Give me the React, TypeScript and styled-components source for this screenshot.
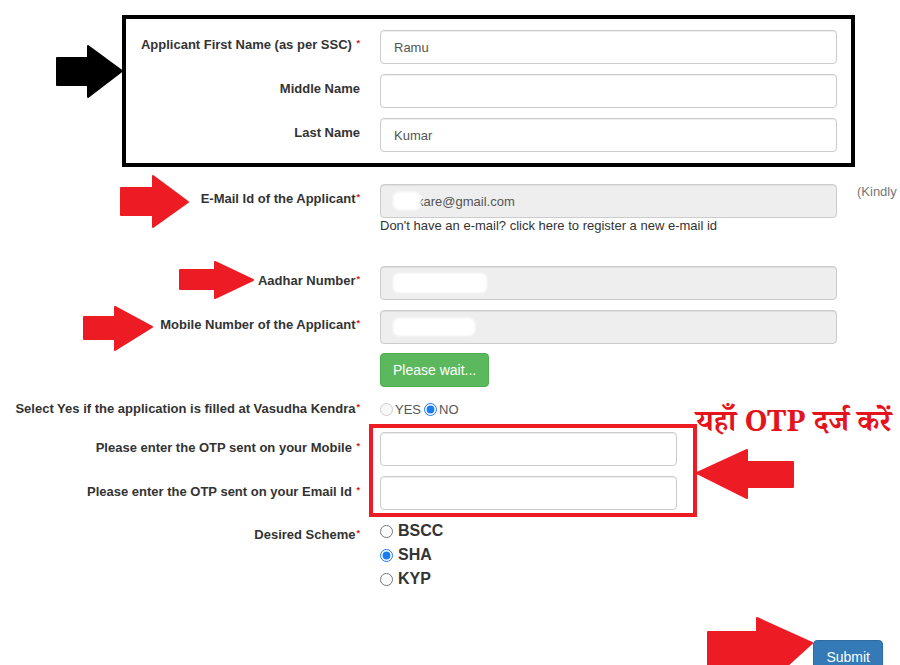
import React from "react";
import styled, { createGlobalStyle } from "styled-components";

const GlobalStyle = createGlobalStyle`
  html, body {
    margin: 0;
    padding: 0;
    background: #fff;
    overflow: hidden;
  }
  body {
    font-family: "Liberation Sans", Arial, Helvetica, sans-serif;
    color: #333;
  }
  * { box-sizing: border-box; }
`;

const Page = styled.div`
  position: relative;
  width: 900px;
  height: 665px;
  overflow: hidden;
  padding-top: 15px;
  display: flex;
  flex-direction: column;
`;

const NameBox = styled.div`
  margin-left: 122px;
  width: 733px;
  border: 4px solid #000;
  padding: 11px 14px 11px 0;
  display: flex;
  flex-direction: column;
  gap: 10px;
`;

const Row = styled.div<{ $label: number; $mt?: number }>`
  display: grid;
  grid-template-columns: ${(p) => p.$label}px 457px 1fr;
  column-gap: 20px;
  margin-top: ${(p) => p.$mt ?? 0}px;
  align-items: start;
`;

const Label = styled.label<{ $pt?: number }>`
  display: block;
  text-align: right;
  font-weight: 700;
  font-size: 13px;
  line-height: 20px;
  padding-top: ${(p) => p.$pt ?? 5}px;
  color: #333;
  white-space: nowrap;
`;

const Req = styled.span`
  color: #e4131c;
  font-size: 9px;
  line-height: 0;
  position: relative;
  top: -3px;
  margin-left: 1px;
`;

const FieldCol = styled.div`
  display: flex;
  flex-direction: column;
`;

const TextInput = styled.input<{ $w?: number }>`
  display: block;
  width: ${(p) => (p.$w ? `${p.$w}px` : "100%")};
  height: 34px;
  padding: 6px 13px;
  font-family: "Liberation Sans", Arial, sans-serif;
  font-size: 13px;
  color: #555;
  background: #fff;
  border: 1px solid #ccc;
  border-radius: 4px;
  box-shadow: inset 0 1px 1px rgba(0, 0, 0, 0.075);
  outline: none;
`;

const ReadonlyField = styled.div`
  display: flex;
  align-items: center;
  height: 34px;
  padding: 0 12px;
  font-size: 13px;
  color: #555;
  background: #eee;
  border: 1px solid #ccc;
  border-radius: 4px;
  box-shadow: inset 0 1px 1px rgba(0, 0, 0, 0.075);
  position: relative;
  overflow: hidden;
`;

const Masked = styled.span<{ $w: number; $h: number }>`
  display: inline-block;
  width: ${(p) => p.$w}px;
  height: ${(p) => p.$h}px;
  background: #fff;
  border-radius: 6px;
  filter: blur(1px);
  flex-shrink: 0;
`;

const Faint = styled.span`
  color: #555;
  margin-left: -4px;
`;

const Helper = styled.div`
  font-size: 13px;
  line-height: 16px;
  color: #333;
`;

const HelperLink = styled.a`
  color: #333;
  text-decoration: none;
`;

const SideNote = styled.div`
  font-size: 13px;
  line-height: 16px;
  color: #777;
  white-space: nowrap;
`;

const Button = styled.button<{ $variant: "success" | "primary" }>`
  height: 34px;
  padding: 0 12px;
  font-family: "Liberation Sans", Arial, sans-serif;
  font-size: 14px;
  color: #fff;
  border-radius: 4px;
  border: 1px solid ${(p) => (p.$variant === "success" ? "#4cae4c" : "#2e6da4")};
  background: ${(p) => (p.$variant === "success" ? "#5cb85c" : "#337ab7")};
  cursor: pointer;
  justify-self: start;
`;

const RadioLine = styled.div<{ $size: number; $bold?: boolean; $lh: number }>`
  display: flex;
  align-items: center;
  height: ${(p) => p.$lh}px;
  font-size: ${(p) => p.$size}px;
  font-weight: ${(p) => (p.$bold ? 700 : 400)};
  color: ${(p) => (p.$bold ? "#333" : "#555")};
`;

const Radio = styled.input.attrs({ type: "radio" })<{ $gap: number; $ml?: number }>`
  width: 13px;
  height: 13px;
  margin: 0 ${(p) => p.$gap}px 0 ${(p) => p.$ml ?? 0}px;
  accent-color: #1b7cf0;
`;

const OtpGroup = styled.div`
  display: grid;
  grid-template-columns: 360px auto;
  column-gap: 9px;
  margin-top: 5px;
  align-items: start;
`;

const OtpLabels = styled.div`
  display: flex;
  flex-direction: column;
  gap: 10px;
  padding-top: 9px;
`;

const LabelCell = styled.div`
  height: 34px;
`;

const RedBox = styled.div`
  width: 328px;
  border: 4px solid #ed1c24;
  padding: 4px 16px 3px 7px;
  display: flex;
  flex-direction: column;
  gap: 10px;
`;

const SchemeList = styled.div`
  display: flex;
  flex-direction: column;
`;

const SubmitRow = styled.div`
  display: flex;
  justify-content: flex-end;
  padding-right: 17px;
  margin-top: 49px;
`;

const Overlay = styled.svg`
  position: absolute;
  left: 0;
  top: 0;
  width: 900px;
  height: 665px;
  pointer-events: none;
`;

const Callout = styled.div`
  position: absolute;
  left: 696px;
  top: 409px;
  font-family: "Noto Serif Devanagari", "Noto Sans Devanagari", "Liberation Serif", serif;
  font-weight: 700;
  font-size: 29.5px;
  line-height: 36px;
  color: #e4131c;
  white-space: nowrap;
`;

const arrows: { points: string; fill: string }[] = [
  { points: "57,58 88,58 88,46 122,71 88,97 88,85 57,85", fill: "#000" },
  { points: "121,188 153,188 153,176 188,202 153,227 153,215 121,215", fill: "#ed1c24" },
  { points: "180,270 215,270 215,262 253,280 215,298 215,289 180,289", fill: "#ed1c24" },
  { points: "84,317 115,317 115,307 152,327 115,350 115,339 84,339", fill: "#ed1c24" },
  { points: "793,462 747,462 747,450 697,473 747,498 747,487 793,487", fill: "#ed1c24" },
  { points: "708,632 757,632 757,618 812,643 757,693 757,680 708,680", fill: "#ed1c24" },
];

export default function App() {
  return (
    <>
      <GlobalStyle />
      <Page>
        <NameBox>
          <Row $label={234}>
            <Label>
              Applicant First Name (as per SSC) <Req>*</Req>
            </Label>
            <TextInput defaultValue="Ramu" />
          </Row>
          <Row $label={234}>
            <Label>Middle Name</Label>
            <TextInput defaultValue="" />
          </Row>
          <Row $label={234}>
            <Label>Last Name</Label>
            <TextInput defaultValue="Kumar" />
          </Row>
        </NameBox>

        <Row $label={360} $mt={17}>
          <Label>
            E-Mail Id of the Applicant<Req>*</Req>
          </Label>
          <FieldCol>
            <ReadonlyField>
              <Masked $w={28} $h={18} />
              <Faint>kare@gmail.com</Faint>
            </ReadonlyField>
            <Helper>
              Don't have an e-mail? <HelperLink href="#">click here to register a new e-mail id</HelperLink>
            </Helper>
          </FieldCol>
          <SideNote>(Kindly</SideNote>
        </Row>

        <Row $label={360} $mt={32}>
          <Label>
            Aadhar Number<Req>*</Req>
          </Label>
          <ReadonlyField>
            <Masked $w={94} $h={20} />
          </ReadonlyField>
        </Row>

        <Row $label={360} $mt={10}>
          <Label>
            Mobile Number of the Applicant<Req>*</Req>
          </Label>
          <ReadonlyField>
            <Masked $w={82} $h={18} />
          </ReadonlyField>
        </Row>

        <Row $label={360} $mt={9}>
          <span />
          <Button $variant="success">Please wait...</Button>
        </Row>

        <Row $label={360} $mt={12}>
          <Label $pt={0}>
            Select Yes if the application is filled at Vasudha Kendra<Req>*</Req>
          </Label>
          <RadioLine $size={13} $lh={20}>
            <Radio name="vasudha" disabled $gap={2} />
            YES
            <Radio name="vasudha" defaultChecked $gap={2} $ml={3} />
            NO
          </RadioLine>
        </Row>

        <OtpGroup>
          <OtpLabels>
            <LabelCell>
              <Label>
                Please enter the OTP sent on your Mobile <Req>*</Req>
              </Label>
            </LabelCell>
            <LabelCell>
              <Label>
                Please enter the OTP sent on your Email Id <Req>*</Req>
              </Label>
            </LabelCell>
          </OtpLabels>
          <RedBox>
            <TextInput $w={297} />
            <TextInput $w={297} />
          </RedBox>
        </OtpGroup>

        <Row $label={360} $mt={2}>
          <Label $pt={6}>
            Desired Scheme<Req>*</Req>
          </Label>
          <SchemeList>
            <RadioLine $size={16} $bold $lh={24}>
              <Radio name="scheme" $gap={5} />
              BSCC
            </RadioLine>
            <RadioLine $size={16} $bold $lh={24}>
              <Radio name="scheme" defaultChecked $gap={5} />
              SHA
            </RadioLine>
            <RadioLine $size={16} $bold $lh={24}>
              <Radio name="scheme" $gap={5} />
              KYP
            </RadioLine>
          </SchemeList>
        </Row>

        <SubmitRow>
          <Button $variant="primary">Submit</Button>
        </SubmitRow>

        <Callout>यहाँ OTP दर्ज करें</Callout>

        <Overlay viewBox="0 0 900 665">
          {arrows.map((a, i) => (
            <polygon
              key={i}
              points={a.points}
              fill={a.fill}
              stroke={a.fill}
              strokeWidth={2}
              strokeLinejoin="round"
            />
          ))}
        </Overlay>
      </Page>
    </>
  );
}
